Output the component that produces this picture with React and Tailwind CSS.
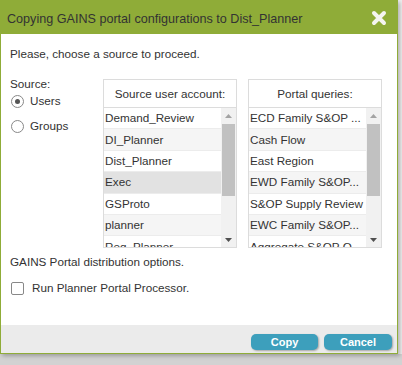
import React from "react";

const users = ["Demand_Review", "DI_Planner", "Dist_Planner", "Exec", "GSProto", "planner", "Reg_Planner"];
const queries = ["ECD Family S&OP ...", "Cash Flow", "East Region", "EWD Family S&OP...", "S&OP Supply Review", "EWC Family S&OP...", "Aggregate S&OP O..."];

function Scrollbar() {
  return (
    <div className="absolute right-0 top-0 bottom-0 w-[15px] bg-[#f1f1f1] flex flex-col items-center">
      <div className="h-[15px] w-full flex items-center justify-center">
        <svg width="7" height="4" viewBox="0 0 7 4"><path d="M0 4 L3.5 0 L7 4Z" fill="#a3a3a3" /></svg>
      </div>
      <div className="w-[13px] h-[72px] bg-[#c1c1c1] mt-[1px]"></div>
      <div className="flex-1"></div>
      <div className="h-[15px] w-full flex items-center justify-center">
        <svg width="7" height="4" viewBox="0 0 7 4"><path d="M0 0 L3.5 4 L7 0Z" fill="#505050" /></svg>
      </div>
    </div>
  );
}

function ListBox({ title, items, selected }) {
  return (
    <div className="w-[134px] flex flex-col">
      <div className="h-[29px] border border-[#dcdcdc] flex items-center justify-center text-[11.7px] text-[#333]">{title}</div>
      <div className="relative h-[140px] border border-[#dcdcdc] border-t-0 overflow-hidden">
        <div className="pr-[15px]">
          {items.map((it, i) => (
            <div
              key={it}
              className={
                "h-[21.4px] flex items-center pl-[1px] text-[11.7px] text-[#333] whitespace-nowrap overflow-hidden border-b border-[#ececec] " +
                (i === selected ? "bg-[#e2e2e2]" : i % 2 === 1 ? "bg-[#f5f5f5]" : "bg-white")
              }
            >
              {it}
            </div>
          ))}
        </div>
        <Scrollbar />
      </div>
    </div>
  );
}

export default function App() {
  return (
    <div className="w-[402px] h-[365px] bg-[#d2d2d2] relative overflow-hidden" style={{ fontFamily: '"Liberation Sans", Arial, sans-serif' }}>
      <div className="absolute right-0 top-0 w-[4px] h-[354px] bg-[#eeeeee]"></div>
      <div className="w-[398px] h-[354px] border border-[#8fac38] bg-white flex flex-col shadow-[2px_2px_4px_rgba(0,0,0,0.25)] relative">
        <div className="h-[33px] shrink-0 bg-[#8fac38] flex items-center justify-between pl-[6px] pr-[10px] pt-[4px]">
          <span className="text-[12.6px] text-[#333]">Copying GAINS portal configurations to Dist_Planner</span>
          <svg width="16" height="16" viewBox="0 0 16 16" className="-mt-[4px]">
            <path d="M3 3 L13 13 M13 3 L3 13" stroke="#f4f4f0" strokeWidth="4" strokeLinecap="round" />
          </svg>
        </div>
        <div className="flex-1 px-[9px] pt-[13px] text-[11.7px] leading-[14px] text-[#333]">
          <div>Please, choose a source to proceed.</div>
          <div className="flex mt-[16px]">
            <div className="w-[93px]">
              <div>Source:</div>
              <label className="flex items-center gap-[6px] mt-[3px]">
                <span className="w-[13px] h-[13px] rounded-full border border-[#888] flex items-center justify-center ml-[1px]">
                  <span className="w-[5px] h-[5px] rounded-full bg-[#555]"></span>
                </span>
                Users
              </label>
              <label className="flex items-center gap-[6px] mt-[11px]">
                <span className="w-[13px] h-[13px] rounded-full border border-[#888] ml-[1px]"></span>
                Groups
              </label>
            </div>
            <div className="flex gap-[11px] mt-[2px]">
              <ListBox title="Source user account:" items={users} selected={3} />
              <ListBox title="Portal queries:" items={queries} selected={-1} />
            </div>
          </div>
          <div className="mt-[7px]">GAINS Portal distribution options.</div>
          <label className="flex items-center gap-[8px] mt-[12px]">
            <span className="w-[13px] h-[13px] rounded-[2px] border border-[#888] ml-[1px]"></span>
            Run Planner Portal Processor.
          </label>
        </div>
        <div className="h-[28px] shrink-0 bg-[#ebebeb] flex items-start justify-end gap-[6px] pr-[5px] pt-[9px]">
          <button className="w-[67px] h-[16px] rounded-[5px] bg-[#3d9fbc] text-white font-bold text-[11px] shadow-[1px_1px_2px_rgba(0,0,0,0.3)] leading-none">Copy</button>
          <button className="w-[68px] h-[16px] rounded-[5px] bg-[#3d9fbc] text-white font-bold text-[11px] shadow-[1px_1px_2px_rgba(0,0,0,0.3)] leading-none">Cancel</button>
        </div>
      </div>
    </div>
  );
}
